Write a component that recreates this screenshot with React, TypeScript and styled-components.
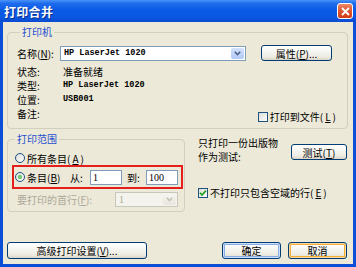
import styled, { createGlobalStyle, css } from "styled-components";

const GlobalStyle = createGlobalStyle`
  html, body {
    margin: 0;
    padding: 0;
    background: #ffffff;
  }
  body {
    font-family: "Noto Sans CJK SC", "DejaVu Sans", sans-serif;
    font-size: 10px;
    color: #000000;
  }
  * {
    box-sizing: border-box;
  }
`;

const Window = styled.div`
  width: 356px;
  height: 267px;
  display: flex;
  flex-direction: column;
  overflow: hidden;
  background: #0a4fd6;
`;

const TitleBar = styled.div`
  height: 22px;
  flex: none;
  display: flex;
  align-items: center;
  justify-content: space-between;
  padding: 0 3px 0 4px;
  background: linear-gradient(
    180deg,
    #4a93f8 0%,
    #1f6cec 15%,
    #0a5ae6 45%,
    #0a58e4 75%,
    #0a4cd0 100%
  );
`;

const Title = styled.span`
  color: #ffffff;
  font-size: 12px;
  font-weight: 700;
  letter-spacing: 0.3px;
  text-shadow: 1px 1px 0 #0b2f8f;
`;

const CloseButton = styled.div`
  width: 16px;
  height: 16px;
  border: 1px solid #ffffff;
  border-radius: 3px;
  background: linear-gradient(180deg, #ee8a6a 0%, #e05a37 40%, #cf3c16 100%);
  display: flex;
  align-items: center;
  justify-content: center;
`;

const Body = styled.div`
  flex: 1;
  display: flex;
  flex-direction: column;
  margin: 0 3px 3px;
  padding: 3px 5px 5px 4px;
  background: #ece9d8;
`;

const Group = styled.fieldset`
  margin: 0;
  min-width: 0;
  border: 1px solid #d0d0bf;
  border-radius: 4px;
`;

const PrinterGroup = styled(Group)`
  height: 104px;
  padding: 6px 15px 0 9px;
`;

const RangeGroup = styled(Group)`
  flex: none;
  width: 178px;
  height: 80px;
  padding: 5px 1px 0 4px;
`;

const Legend = styled.legend`
  padding: 0 2px;
  margin-left: 3px;
  color: #1f4fd1;
  font-size: 10px;
  line-height: 14px;
`;

const Row = styled.div<{ $h: number }>`
  display: flex;
  align-items: center;
  height: ${(p) => p.$h}px;
`;

const FieldLabel = styled.span<{ $w: number; $muted?: boolean }>`
  flex: none;
  width: ${(p) => p.$w}px;
  white-space: nowrap;
  color: ${(p) => (p.$muted ? "#aca899" : "#000000")};
`;

const ComboBox = styled.div<{ $w: number; $disabled?: boolean }>`
  flex: none;
  width: ${(p) => p.$w}px;
  height: 15px;
  display: flex;
  border: 1px solid ${(p) => (p.$disabled ? "#c9c7ba" : "#7f9db9")};
  background: ${(p) => (p.$disabled ? "#f4f3ee" : "#ffffff")};
`;

const ComboText = styled.span<{ $disabled?: boolean }>`
  flex: 1;
  padding-left: 3px;
  line-height: 13px;
  white-space: nowrap;
  overflow: hidden;
  ${(p) =>
    p.$disabled
      ? css`
          font-family: "Liberation Serif", serif;
          font-size: 10px;
          color: #aca899;
        `
      : css`
          font-family: "Liberation Mono", monospace;
          font-size: 8.5px;
          font-weight: 700;
        `}
`;

const DropButton = styled.span<{ $disabled?: boolean }>`
  flex: none;
  width: 13px;
  margin: 1px;
  border-radius: 2px;
  display: flex;
  align-items: center;
  justify-content: center;
  background: ${(p) =>
    p.$disabled
      ? "linear-gradient(180deg, #f5f4ef, #e8e6dc)"
      : "linear-gradient(180deg, #d3e1fc, #b2c9f6)"};
`;

const PushButton = styled.button<{ $w: number; $h: number; $ring?: "default" | "hot" }>`
  flex: none;
  width: ${(p) => p.$w}px;
  height: ${(p) => p.$h}px;
  padding: 0;
  font-family: inherit;
  font-size: 10px;
  color: #000000;
  border: 1px solid #003c74;
  border-radius: 3px;
  background: linear-gradient(
    180deg,
    #ffffff 0%,
    #f7f7f4 35%,
    #eceae0 80%,
    #d8d3c6 100%
  );
  ${(p) =>
    p.$ring === "default" &&
    css`
      box-shadow: inset 0 0 0 1px #cde0fb, inset 0 0 0 2px #89ade9;
    `}
  ${(p) =>
    p.$ring === "hot" &&
    css`
      box-shadow: inset 0 0 0 1px #fcd998, inset 0 0 0 2px #f0ad3a;
    `}
`;

const InfoArea = styled.div`
  display: flex;
  justify-content: space-between;
  margin-top: 3px;
`;

const InfoGrid = styled.div`
  display: grid;
  grid-template-columns: 46px auto;
  grid-auto-rows: 14px;
  align-items: center;
`;

const Mono = styled.span`
  font-family: "Liberation Mono", monospace;
  font-size: 8.5px;
  font-weight: 700;
`;

const CheckLabel = styled.label<{ $edge?: boolean }>`
  display: flex;
  align-items: center;
  gap: 2px;
  white-space: nowrap;
  ${(p) =>
    p.$edge &&
    css`
      align-self: flex-end;
      margin: 0 -4px -4px 0;
    `}
`;

const CheckBox = styled.span`
  flex: none;
  width: 10px;
  height: 10px;
  border: 1px solid #1c5180;
  background: linear-gradient(135deg, #dcdcd7, #ffffff);
  display: flex;
  align-items: center;
  justify-content: center;
`;

const Radio = styled.span<{ $checked?: boolean }>`
  flex: none;
  width: 10px;
  height: 10px;
  border: 1px solid #1c5180;
  border-radius: 50%;
  background: linear-gradient(135deg, #dcdcd7, #ffffff);
  display: flex;
  align-items: center;
  justify-content: center;

  &::after {
    content: "";
    width: 4px;
    height: 4px;
    border-radius: 50%;
    background: ${(p) => (p.$checked ? "radial-gradient(#8fe38f, #21a121)" : "transparent")};
  }
`;

const Lower = styled.div`
  display: flex;
  margin-top: 3px;
`;

const RadioRow = styled.label`
  display: flex;
  align-items: center;
  gap: 2px;
  height: 14px;
  padding-left: 3px;
`;

const RangeBox = styled.div`
  display: flex;
  align-items: center;
  height: 24px;
  border: 2px solid #e3201b;
  padding-left: 1px;
`;

const RangeText = styled.span<{ $w: number; $ml?: number }>`
  flex: none;
  width: ${(p) => p.$w}px;
  margin-left: ${(p) => p.$ml ?? 0}px;
  white-space: nowrap;
`;

const NumInput = styled.div`
  flex: none;
  width: 32px;
  height: 15px;
  border: 1px solid #7f9db9;
  background: #ffffff;
  padding-left: 2px;
  font-family: "Liberation Serif", serif;
  font-size: 10px;
  line-height: 13px;
`;

const FirstRow = styled(Row)`
  margin-top: 3px;
  padding-left: 5px;
`;

const RightColumn = styled.div`
  flex: 1;
  display: flex;
  flex-direction: column;
  margin-left: 13px;
  padding-top: 4px;
`;

const NoteRow = styled.div`
  display: flex;
  justify-content: space-between;
  align-items: flex-start;
`;

const Note = styled.span`
  line-height: 14px;
`;

const TestButton = styled(PushButton)`
  margin: 8px 1px 0 0;
`;

const BlankCheckRow = styled.div`
  margin-top: 21px;
`;

const Spacer = styled.div`
  flex: 1;
`;

const ButtonBar = styled.div`
  display: flex;
  align-items: center;
  gap: 7px;
  padding-right: 1px;
`;

const Push = styled.div`
  flex: 1;
`;

function Chevron({ color }: { color: string }) {
  return (
    <svg width="7" height="5" viewBox="0 0 7 5">
      <path d="M0.8 0.8 L3.5 3.6 L6.2 0.8" fill="none" stroke={color} strokeWidth="1.5" />
    </svg>
  );
}

function Tick() {
  return (
    <svg width="8" height="8" viewBox="0 0 8 8">
      <path d="M1 3.8 L3 6 L7 1.6" fill="none" stroke="#21a121" strokeWidth="1.7" />
    </svg>
  );
}

function App() {
  return (
    <>
      <GlobalStyle />
      <Window>
        <TitleBar>
          <Title>打印合并</Title>
          <CloseButton>
            <svg width="9" height="9" viewBox="0 0 9 9">
              <path d="M1 1 L8 8 M8 1 L1 8" stroke="#ffffff" strokeWidth="1.8" />
            </svg>
          </CloseButton>
        </TitleBar>
        <Body>
          <PrinterGroup>
            <Legend>打印机</Legend>
            <Row $h={16}>
              <FieldLabel $w={43}>
                名称(<u>N</u>):
              </FieldLabel>
              <ComboBox $w={186}>
                <ComboText>HP LaserJet 1020</ComboText>
                <DropButton>
                  <Chevron color="#4d6185" />
                </DropButton>
              </ComboBox>
              <PushButton $w={71} $h={16} style={{ marginLeft: 15 }}>
                属性(<u>P</u>)...
              </PushButton>
            </Row>
            <InfoArea>
              <InfoGrid>
                <span>状态:</span>
                <span>准备就绪</span>
                <span>类型:</span>
                <Mono>HP LaserJet 1020</Mono>
                <span>位置:</span>
                <Mono>USB001</Mono>
                <span>备注:</span>
                <span />
              </InfoGrid>
              <CheckLabel $edge>
                <CheckBox />
                打印到文件(<u>L</u>)
              </CheckLabel>
            </InfoArea>
          </PrinterGroup>

          <Lower>
            <RangeGroup>
              <Legend>打印范围</Legend>
              <RadioRow>
                <Radio />
                所有条目(<u>A</u>)
              </RadioRow>
              <RangeBox>
                <Radio $checked />
                <RangeText $w={43} $ml={2}>
                  条目(<u>B</u>)
                </RangeText>
                <RangeText $w={20}>从:</RangeText>
                <NumInput>1</NumInput>
                <RangeText $w={19} $ml={5}>
                  到:
                </RangeText>
                <NumInput>100</NumInput>
              </RangeBox>
              <FirstRow $h={15}>
                <FieldLabel $w={98} $muted>
                  要打印的首行(<u>F</u>):
                </FieldLabel>
                <ComboBox $w={63} $disabled>
                  <ComboText $disabled>1</ComboText>
                  <DropButton $disabled>
                    <Chevron color="#c3c1b5" />
                  </DropButton>
                </ComboBox>
              </FirstRow>
            </RangeGroup>

            <RightColumn>
              <NoteRow>
                <Note>
                  只打印一份出版物
                  <br />
                  作为测试:
                </Note>
                <TestButton $w={56} $h={16}>
                  测试(<u>T</u>)
                </TestButton>
              </NoteRow>
              <BlankCheckRow>
                <CheckLabel>
                  <CheckBox>
                    <Tick />
                  </CheckBox>
                  不打印只包含空域的行(<u>E</u>)
                </CheckLabel>
              </BlankCheckRow>
            </RightColumn>
          </Lower>

          <Spacer />
          <ButtonBar>
            <PushButton $w={140} $h={17}>
              高级打印设置(<u>V</u>)...
            </PushButton>
            <Push />
            <PushButton $w={59} $h={17} $ring="default">
              确定
            </PushButton>
            <PushButton $w={59} $h={17} $ring="hot">
              取消
            </PushButton>
          </ButtonBar>
        </Body>
      </Window>
    </>
  );
}

export default App;
